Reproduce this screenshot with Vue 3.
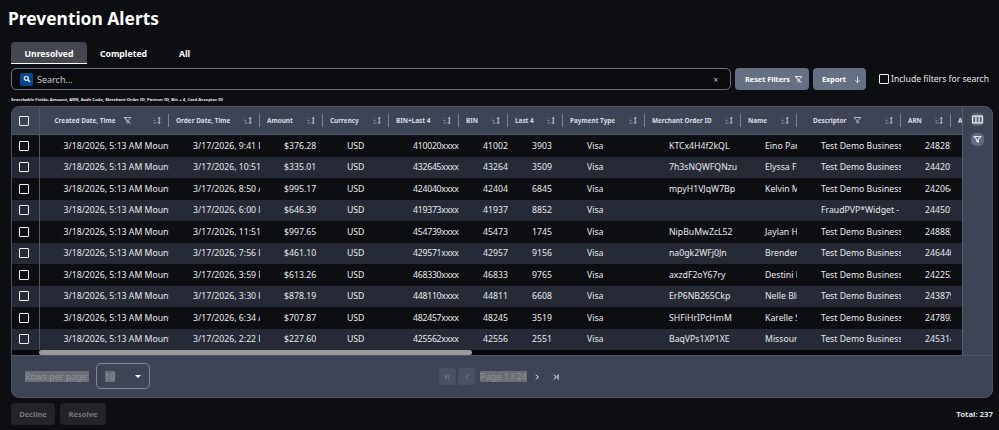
<template>
  <div class="page">
    <h1 class="title">Prevention Alerts</h1>

    <div class="tabs">
      <button v-for="tab in tabs" :key="tab" class="tab" :class="{ active: tab === 'Unresolved' }">{{ tab }}</button>
    </div>

    <div class="toolbar">
      <div class="search">
        <span class="search-icon">
          <svg viewBox="0 0 24 24" width="8" height="8" fill="none" stroke="#dfe8f5" stroke-width="4"><circle cx="10" cy="10" r="6" /><path d="M15 15l6 6" /></svg>
        </span>
        <span class="search-text">Search...</span>
        <span class="search-clear">×</span>
      </div>
      <button class="action-btn reset">
        Reset Filters
        <svg viewBox="0 0 24 24" width="9" height="9" fill="none" stroke="#fff" stroke-width="2"><path d="M3 4h18l-7 8v7l-4-2v-5z" /><path d="M4 3l17 18" /></svg>
      </button>
      <button class="action-btn export">
        Export
        <svg viewBox="0 0 24 24" width="9" height="9" fill="none" stroke="#fff" stroke-width="2"><path d="M12 4v16M6 14l6 6 6-6" /></svg>
      </button>
      <label class="include">
        <span class="box small"></span>
        Include filters for search
      </label>
    </div>

    <div class="hint">Searchable Fields: Amount, ARN, Auth Code, Merchant Order ID, Partner ID, Bin + 4, Card Acceptor ID</div>

    <div class="panel">
      <div class="panel-main">
        <div class="table-area">
          <div class="table-wrap">
            <table class="grid">
              <colgroup>
                <col style="width: 27px" />
                <col v-for="c in columns" :key="c.label" :style="{ width: c.width + 'px' }" />
              </colgroup>
              <thead>
                <tr>
                  <th class="check-col"><span class="box"></span></th>
                  <th v-for="c in columns" :key="c.label" :class="{ divided: c.divider !== false }">
                    <div class="head" :style="{ paddingLeft: c.pad + 'px' }">
                      <span class="head-label">{{ c.label }}</span>
                      <svg v-if="c.filter === 'clear'" class="head-filter" viewBox="0 0 24 24" width="9" height="9" fill="none" stroke="#d5dae4" stroke-width="2"><path d="M3 4h18l-7 8v7l-4-2v-5z" /><path d="M4 3l17 18" /></svg>
                      <svg v-if="c.filter === 'plain'" class="head-filter" viewBox="0 0 24 24" width="9" height="9" fill="none" stroke="#d5dae4" stroke-width="2"><path d="M3 4h18l-7 8v7l-4-2v-5z" /></svg>
                      <svg v-if="c.sort !== false" class="sort" viewBox="0 0 9 8" width="8" height="7" fill="none" stroke="#aeb5c3" stroke-width="0.8"><path d="M0.5 1.5h1M0.5 4h2M0.5 6.8h3.6" /><path d="M7 0.5v7M5.8 1.8L7 0.5l1.2 1.3M5.8 6.2L7 7.5l1.2-1.3" stroke="#d5dae4" stroke-width="1" /></svg>
                    </div>
                  </th>
                </tr>
              </thead>
              <tbody>
                <tr v-for="(r, i) in rows" :key="i" :class="{ alt: i % 2 === 1 }">
                  <td class="check-col"><span class="box"></span></td>
                  <td v-for="(v, j) in rowCells(r)" :key="j"><div class="cell" :class="{ tight: j === 4 }">{{ v }}</div></td>
                </tr>
              </tbody>
            </table>
          </div>
          <div class="scroll-track"><div class="scroll-thumb"></div></div>
        </div>
        <div class="side">
          <span class="side-btn">
            <svg viewBox="0 0 16 12" width="11" height="9" fill="none" stroke="#fff" stroke-width="1.6"><rect x="1" y="1" width="14" height="10" /><path d="M5.7 1v10M10.3 1v10" /></svg>
          </span>
          <span class="side-btn muted">
            <svg viewBox="0 0 24 24" width="9" height="9" fill="none" stroke="#e8ebf0" stroke-width="3"><path d="M3 4h18l-7 8v7l-4-2v-5z" /></svg>
          </span>
        </div>
      </div>

      <div class="pager">
        <div class="rows-per">
          <span class="selected-text">Rows per page:</span>
          <div class="rows-select">
            <span class="selected-text dim">10</span>
            <span class="caret"></span>
          </div>
        </div>
        <div class="pages">
          <span class="page-btn off">
            <svg viewBox="0 0 12 12" width="8" height="8" fill="none" stroke="#7c8494" stroke-width="1.5"><path d="M3 2.5v7M9 2.5L5.5 6 9 9.5" /></svg>
          </span>
          <span class="page-btn off">
            <svg viewBox="0 0 12 12" width="8" height="8" fill="none" stroke="#7c8494" stroke-width="1.5"><path d="M7.5 2.5L4 6l3.5 3.5" /></svg>
          </span>
          <span class="selected-text page-label">Page 1 / 24</span>
          <span class="page-btn">
            <svg viewBox="0 0 12 12" width="8" height="8" fill="none" stroke="#fff" stroke-width="1.5"><path d="M4.5 2.5L8 6 4.5 9.5" /></svg>
          </span>
          <span class="page-btn">
            <svg viewBox="0 0 12 12" width="8" height="8" fill="none" stroke="#fff" stroke-width="1.5"><path d="M3 2.5L6.5 6 3 9.5M9 2.5v7" /></svg>
          </span>
        </div>
      </div>
    </div>

    <div class="bottom">
      <div class="bottom-actions">
        <button class="ghost">Decline</button>
        <button class="ghost">Resolve</button>
      </div>
      <span class="total">Total: 237</span>
    </div>
  </div>
</template>

<script setup>
const tabs = ['Unresolved', 'Completed', 'All']

const columns = [
  { label: 'Created Date, Time', width: 130, pad: 15, filter: 'clear' },
  { label: 'Order Date, Time', width: 91, pad: 7 },
  { label: 'Amount', width: 63, pad: 7 },
  { label: 'Currency', width: 66, pad: 7 },
  { label: 'BIN+Last 4', width: 70, pad: 7 },
  { label: 'BIN', width: 49, pad: 7 },
  { label: 'Last 4', width: 55, pad: 7 },
  { label: 'Payment Type', width: 82, pad: 7 },
  { label: 'Merchant Order ID', width: 96, pad: 7 },
  { label: 'Name', width: 56, pad: 7 },
  { label: 'Descriptor', width: 104, pad: 16, filter: 'plain' },
  { label: 'ARN', width: 50, pad: 7 },
  { label: 'Auth Code', width: 60, pad: 7, sort: false, divider: false }
]

const created = '3/18/2026, 5:13 AM Mountain Time'
const demo = 'Test Demo Business Name'

const rows = [
  ['3/17/2026, 9:41 PM', '$376.28', '410020xxxx', '41002', '3903', 'KTCx4H4f2kQL', 'Eino Parker', demo, '248281'],
  ['3/17/2026, 10:51 PM', '$335.01', '432645xxxx', '43264', '3509', '7h3sNQWFQNzu', 'Elyssa Fay', demo, '244201'],
  ['3/17/2026, 8:50 AM', '$995.17', '424040xxxx', '42404', '6845', 'mpyH1VJqW7Bp', 'Kelvin Moen', demo, '242064'],
  ['3/17/2026, 6:00 PM', '$646.39', '419373xxxx', '41937', '8852', '', '', 'FraudPVP*Widget - Store', '244501'],
  ['3/17/2026, 11:51 PM', '$997.65', '454739xxxx', '45473', '1745', 'NipBuMwZcL52', 'Jaylan Hand', demo, '248883'],
  ['3/17/2026, 7:56 PM', '$461.10', '429571xxxx', '42957', '9156', 'na0gk2WFj0Jn', 'Brenden Kim', demo, '246440'],
  ['3/17/2026, 3:59 PM', '$613.26', '468330xxxx', '46833', '9765', 'axzdF2oY67ry', 'Destini Ray', demo, '242253'],
  ['3/17/2026, 3:30 PM', '$878.19', '448110xxxx', '44811', '6608', 'ErP6NB265Ckp', 'Nelle Blick', demo, '243879'],
  ['3/17/2026, 6:34 AM', '$707.87', '482457xxxx', '48245', '3519', 'SHFiHrIPcHmM', 'Karelle Sipes', demo, '247892'],
  ['3/17/2026, 2:22 PM', '$227.60', '425562xxxx', '42556', '2551', 'BaqVPs1XP1XE', 'Missouri Rau', demo, '245314']
]

const rowCells = (r) => [created, r[0], r[1], 'USD', r[2], r[3], r[4], 'Visa', r[5], r[6], r[7], r[8], '']
</script>

<style>
html,
body {
  margin: 0;
  background: #0d0e12;
}
</style>

<style scoped>
.page {
  width: 999px;
  height: 430px;
  box-sizing: border-box;
  padding: 6px 6px 0 11px;
  background: #0d0e12;
  color: #fff;
  font-family: "Noto Sans", "Open Sans", sans-serif;
  overflow: hidden;
}

.title {
  margin: 0 0 0 -3px;
  font-size: 17.4px;
  line-height: 24px;
  font-weight: 700;
}

.tabs {
  display: flex;
  margin-top: 12px;
}

.tab {
  width: 76px;
  height: 22px;
  padding: 2px 0 0;
  border: none;
  border-bottom: 1px solid transparent;
  border-radius: 4px 4px 0 0;
  background: transparent;
  color: #fff;
  font-family: inherit;
  font-size: 8.7px;
  font-weight: 700;
}

.tab.active {
  background: #44474f;
  border-bottom-color: #fff;
}

.tab:nth-child(2) {
  width: 73px;
}

.tab:nth-child(3) {
  width: 49px;
}

.toolbar {
  display: flex;
  align-items: center;
  margin-top: 4px;
  height: 22px;
}

.search {
  box-sizing: border-box;
  flex: none;
  width: 720px;
  height: 22px;
  display: flex;
  align-items: center;
  padding: 0 12px 0 8px;
  border: 1px solid #6a7285;
  border-radius: 5px;
  background: #0a0b0f;
}

.search-icon {
  width: 13px;
  height: 13px;
  display: flex;
  align-items: center;
  justify-content: center;
  border-radius: 2px;
  background: #0b4590;
}

.search-text {
  flex: 1;
  margin-left: 4px;
  font-size: 9px;
  color: #c3c8d2;
}

.search-clear {
  font-size: 8px;
  color: #d0d4dc;
}

.action-btn {
  box-sizing: border-box;
  flex: none;
  height: 22px;
  display: flex;
  align-items: center;
  padding: 0;
  margin-left: 4px;
  border: none;
  border-radius: 4px;
  background: #667085;
  color: #fff;
  font-family: inherit;
  font-size: 7.3px;
  font-weight: 700;
}

.reset {
  width: 74px;
  padding-left: 10px;
  gap: 4px;
}

.export {
  width: 53px;
  padding-left: 9px;
  gap: 7px;
}

.include {
  flex: none;
  display: flex;
  align-items: center;
  gap: 2px;
  margin-left: 13px;
  font-size: 8.6px;
  white-space: nowrap;
  color: #e4e6ea;
}

.box {
  display: block;
  box-sizing: border-box;
  width: 10px;
  height: 10px;
  margin: 0 auto;
  border: 1.5px solid #f0f1f4;
  border-radius: 1px;
}

.box.small {
  margin: 0;
  border-width: 1px;
}

.hint {
  margin-top: 6px;
  height: 7px;
  font-size: 4.25px;
  line-height: 7px;
  font-weight: 700;
  color: #e8e9ec;
}

.panel {
  box-sizing: border-box;
  width: 982px;
  height: 292px;
  margin-top: 3px;
  display: flex;
  flex-direction: column;
  border: 1px solid #4b5263;
  border-radius: 8px;
  background: #3d4455;
  overflow: hidden;
}

.panel-main {
  display: flex;
  height: 248px;
}

.table-area {
  width: 950px;
  display: flex;
  flex-direction: column;
}

.table-wrap {
  height: 243px;
  overflow: hidden;
}

.grid {
  width: 999px;
  table-layout: fixed;
  border-collapse: collapse;
}

.grid th {
  height: 27px;
  padding: 0;
  background: #3d4455;
  border-bottom: 1px solid #4f5668;
}

.grid th.divided {
  position: relative;
}

.grid th.divided::after {
  content: "";
  position: absolute;
  right: 0;
  top: 7px;
  bottom: 7px;
  width: 1px;
  background: #7d8596;
}

.head {
  display: flex;
  align-items: center;
  padding-right: 8px;
  font-size: 6.4px;
  font-weight: 700;
  color: #d9dde5;
  white-space: nowrap;
  overflow: hidden;
}

.head-filter {
  margin-left: 7px;
  flex: none;
}

.sort {
  margin-left: auto;
  flex: none;
}

.grid td {
  height: 21.5px;
  padding: 0;
  background: #0d0e12;
  font-size: 8.7px;
  color: #e9ebef;
}

.grid tr.alt td {
  background: #252a36;
}

.cell {
  padding-left: 24px;
  white-space: nowrap;
  overflow: hidden;
}

.cell.tight {
  letter-spacing: -0.25px;
}

.check-col {
  border-right: 1px solid #4f5668;
}

.check-col .box {
  position: relative;
  left: -1px;
}

.grid td.check-col {
  background: #0d0e12;
}

.grid tr.alt td.check-col {
  background: #252a36;
}

.scroll-track {
  height: 5px;
  background: #08090c;
}

.scroll-thumb {
  width: 433px;
  height: 5px;
  margin-left: 27px;
  border-radius: 3px;
  background: #9a9b9c;
}

.side {
  flex: 1;
  display: flex;
  flex-direction: column;
  align-items: center;
  gap: 7px;
  padding-top: 6px;
  border-left: 1px solid #555c6e;
  background: #3d4455;
}

.side-btn {
  width: 13px;
  height: 13px;
  display: flex;
  align-items: center;
  justify-content: center;
  border-radius: 5px;
  background: #5a6275;
}

.side-btn.muted {
  background: #636b80;
}

.pager {
  position: relative;
  flex: 1;
  display: flex;
  align-items: center;
  justify-content: center;
  border-top: 1px solid #4f5668;
}

.rows-per {
  position: absolute;
  left: 13px;
  top: 7px;
  display: flex;
  align-items: center;
  gap: 7px;
}

.selected-text {
  background: #6b6e74;
  color: #8c9099;
  font-size: 8.9px;
  line-height: 11px;
}

.selected-text.dim {
  background: #6f7178;
}

.rows-select {
  box-sizing: border-box;
  width: 54px;
  height: 26px;
  display: flex;
  align-items: center;
  justify-content: space-between;
  padding: 0 8px;
  border: 1px solid #838a99;
  border-radius: 5px;
}

.caret {
  width: 0;
  height: 0;
  border-left: 3px solid transparent;
  border-right: 3px solid transparent;
  border-top: 3px solid #fff;
}

.pages {
  display: flex;
  align-items: center;
  gap: 2px;
}

.page-btn {
  width: 17px;
  height: 17px;
  display: flex;
  align-items: center;
  justify-content: center;
  border-radius: 3px;
}

.page-btn.off {
  background: #4a5162;
}

.page-label {
  margin-left: 3px;
}

.bottom {
  display: flex;
  align-items: center;
  justify-content: space-between;
  height: 22px;
  margin-top: 5px;
}

.bottom-actions {
  display: flex;
  gap: 5px;
}

.ghost {
  height: 22px;
  padding: 0;
  border: none;
  border-radius: 4px;
  background: #232427;
  color: #777a80;
  font-family: inherit;
  font-size: 7.5px;
  font-weight: 700;
}

.ghost:first-child {
  width: 44px;
}

.ghost:last-child {
  width: 46px;
}

.total {
  font-size: 7.8px;
  font-weight: 700;
  color: #dfe1e5;
}
</style>
